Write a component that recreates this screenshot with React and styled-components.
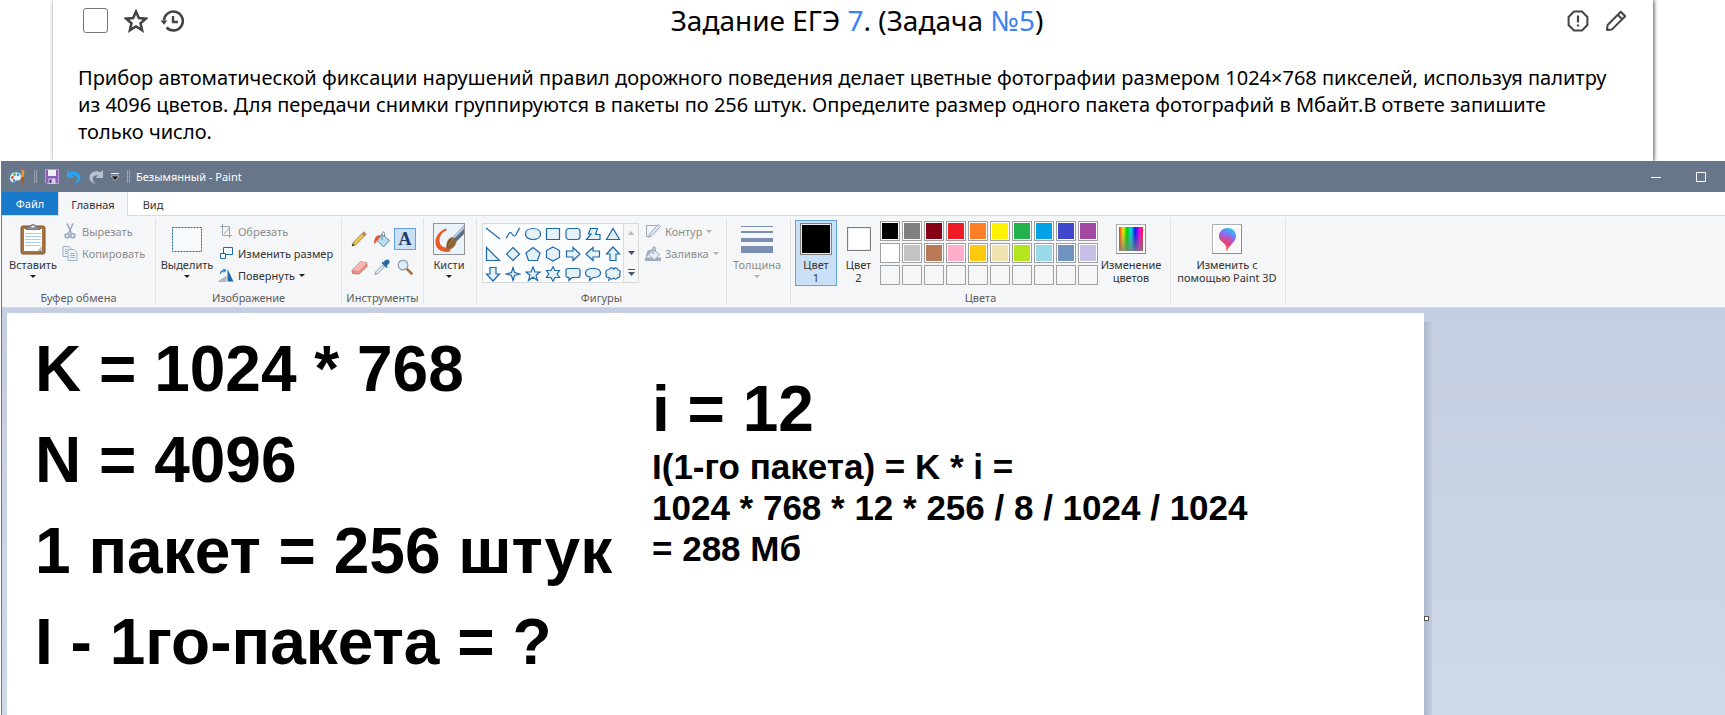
import React from "react";
import styled, { createGlobalStyle, css } from "styled-components";

const Global = createGlobalStyle`
  *, *::before, *::after { box-sizing: border-box; }
  body { margin: 0; background: #fff; color: #000; font-family: "Noto Sans", "Open Sans", sans-serif; }
  button { font: inherit; color: inherit; background: none; border: 0; padding: 0; margin: 0; }
  svg { display: block; flex: none; }
`;

/* ---------- page and task card ---------- */

const Page = styled.div`
  display: flex;
  flex-direction: column;
  height: 100vh;
  overflow: hidden;
`;

const TaskCard = styled.article`
  flex: none;
  margin: 0 72px 0 53px;
  padding-bottom: 16px;
  box-shadow: 1px 0 4px rgba(0, 0, 0, 0.7);
  clip-path: inset(0 -6px 0 -3px);
`;

const TaskHeader = styled.header`
  display: grid;
  grid-template-columns: 1fr auto 1fr;
  align-items: center;
  height: 41px;
  padding: 0 22px 0 30px;
`;

const HeaderSide = styled.div`
  display: flex;
  align-items: center;
  justify-content: ${(p) => (p.$end ? "flex-end" : "flex-start")};
  gap: ${(p) => (p.$end ? "14px" : "12px")};
  padding-right: ${(p) => (p.$end ? "3px" : "0")};
`;

const CheckBox = styled.input`
  appearance: none;
  width: 25px;
  height: 25px;
  margin: 0 4px 0 0;
  border: 1px solid #767676;
  border-radius: 3px;
  background: #fff;
`;

const TaskTitle = styled.h1`
  margin: 0;
  font-size: 28px;
  line-height: 41px;
  font-weight: 400;
`;

const TitleLink = styled.a`
  color: #3b82f6;
  text-decoration: none;
`;

const TaskText = styled.p`
  margin: 23px 38px 0 25px;
  font-size: 20px;
  line-height: 27px;
`;

/* ---------- paint window frame ---------- */

const Window = styled.section`
  flex: 1;
  min-height: 0;
  display: flex;
  flex-direction: column;
  margin-left: 1px;
  border-left: 1px solid #697789;
  font-size: 11px;
  line-height: 13px;
  color: #333;
`;

const TitleBar = styled.div`
  flex: none;
  display: flex;
  align-items: center;
  height: 31px;
  padding: 0 2px 0 7px;
  background: #687689;
  color: #fff;
`;

const QuickTools = styled.div`
  display: flex;
  align-items: center;
  gap: 8px;
`;

const Divider = styled.span`
  width: 3px;
  height: 13px;
  border: solid #99a3b0;
  border-width: 0 1px;
`;

const WindowTitle = styled.span`
  margin-left: 6px;
  flex: 1;
`;

const CaptionButton = styled.button`
  display: flex;
  align-items: center;
  justify-content: center;
  width: 45px;
  height: 31px;
`;

const TabBar = styled.nav`
  flex: none;
  display: flex;
  height: 24px;
  background: #fff;
  border-bottom: 1px solid #dadbdc;
`;

const Tab = styled.button`
  width: ${(p) => p.$width}px;
  height: 24px;
  ${(p) =>
    p.$file &&
    css`
      height: 23px;
      background: #1979ca;
      color: #fff;
    `}
  ${(p) =>
    p.$active &&
    css`
      background: #f5f6f7;
      border: solid #dadbdc;
      border-width: 0 1px;
    `}
`;

/* ---------- ribbon ---------- */

const Ribbon = styled.div`
  flex: none;
  display: flex;
  height: 92px;
  padding-top: 2px;
  background: #f5f6f7;
  border-bottom: 1px solid #dadbdc;
`;

const Group = styled.div`
  display: flex;
  flex-direction: column;
  align-items: center;
  flex: none;
  width: ${(p) => p.$width}px;
  height: 86px;
  border-right: 1px solid #e2e3e4;
`;

const GroupBody = styled.div`
  display: flex;
  align-items: flex-start;
  width: 100%;
  height: 73px;
  padding: 2px 0 0 ${(p) => p.$left || 0}px;
  gap: ${(p) => p.$gap || 0}px;
`;

const GroupLabel = styled.span`
  color: #5c5c5c;
  white-space: nowrap;
`;

const BigButton = styled.button`
  display: flex;
  flex-direction: column;
  align-items: center;
  flex: none;
  width: ${(p) => p.$width}px;
  height: 66px;
  border: 1px solid ${(p) => (p.$active ? "#62a2e4" : "transparent")};
  background: ${(p) => (p.$active ? "#c9e0f7" : "transparent")};
  color: ${(p) => (p.$disabled ? "#8d8d8d" : "inherit")};
`;

const IconSlot = styled.span`
  display: flex;
  align-items: center;
  justify-content: center;
  height: 36px;
  margin-bottom: 1px;
`;

const ButtonText = styled.span`
  text-align: center;
  white-space: nowrap;
`;

const Arrow = styled.span`
  flex: none;
  width: 0;
  height: 0;
  border: 3px solid transparent;
  border-bottom: 0;
  border-top-color: ${(p) => (p.$muted ? "#b0b0b0" : "#1e1e1e")};
  ${BigButton} & { margin-top: 4px; }
`;

const CommandList = styled.div`
  display: flex;
  flex-direction: column;
`;

const Command = styled.button`
  display: flex;
  align-items: center;
  gap: 4px;
  height: 22px;
  white-space: nowrap;
  color: ${(p) => (p.$disabled ? "#8d8d8d" : "inherit")};
`;

const ToolGrid = styled.div`
  display: grid;
  grid-template-columns: repeat(3, 22px);
  gap: 6px 1px;
  padding-top: 8px;
`;

const ToolButton = styled.button`
  display: flex;
  align-items: center;
  justify-content: center;
  height: 22px;
  border: 1px solid ${(p) => (p.$active ? "#62a2e4" : "transparent")};
  background: ${(p) => (p.$active ? "#c9e0f7" : "transparent")};
  font: 700 18px/20px "Liberation Serif", serif;
  color: #1f3a63;
`;

const BrushFrame = styled.span`
  border: 1px solid #8f9499;
  background: #eaf3fa;
`;

const Gallery = styled.div`
  display: flex;
  margin-top: 3px;
  border: 1px solid #d8dadc;
  background: #fbfcfd;
`;

const ShapeGrid = styled.div`
  display: grid;
  grid-template-columns: repeat(7, 20px);
  grid-auto-rows: 20px;
  height: 58px;
`;

const ShapeButton = styled.button`
  display: flex;
  align-items: center;
  justify-content: center;
  height: 19px;
`;

const GalleryScroll = styled.div`
  display: flex;
  flex-direction: column;
  justify-content: space-around;
  width: 15px;
  border-left: 1px solid #d8dadc;
  background: #f5f6f7;
`;

const ScrollButton = styled.button`
  display: flex;
  justify-content: center;
`;

const Swatch = styled.span`
  width: ${(p) => p.$size}px;
  height: ${(p) => p.$size}px;
  border: 1px solid #7f7f7f;
  padding: 1px;
  background: ${(p) => p.$color} content-box;
  box-shadow: inset 0 0 0 1px #e9eef4;
`;

const Palette = styled.div`
  display: grid;
  grid-template-columns: repeat(10, 20px);
  grid-auto-rows: 20px;
  gap: 2px;
  padding-top: 1px;
`;

const PaletteCell = styled.button`
  border: 1px solid #a0a0a0;
  background: ${(p) => p.$color || "#f5f6f7"};
  box-shadow: ${(p) => (p.$color ? "inset 0 0 0 1px #fff" : "none")};
`;

const PictureFrame = styled.span`
  display: flex;
  padding: 2px;
  border: 1px solid #aeb0b2;
  border-right-color: #8a8c8e;
  border-bottom-color: #8a8c8e;
  background: #fff;
`;

/* ---------- drawing area ---------- */

const Workspace = styled.div`
  flex: 1;
  min-height: 0;
  display: flex;
  padding: 5px 0 0 5px;
  background: linear-gradient(#c5cde0, #cfd9e8);
`;

const Canvas = styled.div`
  flex: 1;
  display: flex;
  position: relative;
  background: #fff;
  color: #000;
  font-family: "Liberation Sans", Arial, sans-serif;
  font-weight: 700;
  white-space: nowrap;
`;

const CanvasSide = styled.div`
  flex: none;
  display: flex;
  align-items: flex-start;
  width: 301px;
  padding-top: 9px;
`;

const CanvasShadow = styled.div`
  align-self: stretch;
  width: 8px;
  background: linear-gradient(90deg, #a9b7ca, #c3cde0);
`;

const ResizeHandle = styled.span`
  position: absolute;
  right: -5px;
  top: 303px;
  width: 5px;
  height: 5px;
  border: 1px solid #555;
  background: #fff;
`;

const GivenNotes = styled.div`
  flex: none;
  width: 616px;
  padding: 11px 0 0 28px;
  font-size: 64px;
  line-height: 91px;
`;

const SolutionNotes = styled.div`
  padding: 60px 0 0 29px;
  font-size: 35px;
  line-height: 41px;
`;

const BigLine = styled.div`
  font-size: 64px;
  line-height: 73px;
`;

/* ---------- icons ---------- */

const StarIcon = () => (
  <svg width="24" height="24" viewBox="0 0 24 24" fill="none" stroke="#444" strokeWidth="2.6">
    <path d="M12 2.6l2.8 6.5 7 .6-5.3 4.600 1.600 6.900L12 17.500l-6.100 3.700 1.600-6.900L2.200 9.700l7-.6z" />
  </svg>
);

const HistoryIcon = () => (
  <svg width="24" height="24" viewBox="0 0 24 24" fill="none" stroke="#444" strokeWidth="2.6">
    <path d="M4 11.500a9.400 9.400 0 1 1 2.600 7" />
    <path d="M13 7v6h5" strokeWidth="2.400" />
    <path d="M.5 11.500h7L4 15.800z" fill="#444" stroke="none" />
  </svg>
);

const ReportIcon = () => (
  <svg width="24" height="24" viewBox="0 0 24 24" fill="none" stroke="#444" strokeWidth="2">
    <path d="M8 2.600h8L21.400 8v8L16 21.400H8L2.600 16V8z" />
    <path d="M12 6.600v7M12 15.600v2" strokeWidth="2.200" />
  </svg>
);

const EditIcon = () => (
  <svg width="24" height="24" viewBox="0 0 24 24" fill="none" stroke="#444" strokeWidth="2" strokeLinejoin="round">
    <path d="M3 21l.6-5L16.800 2.800 21.200 7.200 8 20.400z M13.800 5.800l4.400 4.400" />
  </svg>
);

const PaintIcon = () => (
  <svg width="17" height="16" viewBox="0 0 17 16">
    <path d="M7 3C3 3 .6 6 .6 9.200.6 12.600 3 14 5 13.600c1.600-.4 1.600-2 3-1.800 2 .4 4.600-1 4.600-4.400C12.600 4.800 10 3 7 3z" fill="#e6f1f8" stroke="#4d87b0" strokeWidth=".8" />
    <circle cx="3.400" cy="8.500" r="1.400" fill="#e04a2a" />
    <circle cx="5.600" cy="5.600" r="1.400" fill="#4fae3c" />
    <circle cx="9" cy="5.700" r="1.300" fill="#2d8fe0" />
    <circle cx="5" cy="11.400" r="1.200" fill="#2b76c0" />
    <path d="M12.600 0l2.800 2-.6 6.500h-2z" fill="#f39a2c" />
    <path d="M12.600 8h2.400l-.4 7h-1.600z" fill="#b3561a" />
  </svg>
);

const SaveIcon = () => (
  <svg width="14" height="15" viewBox="0 0 14 15">
    <path d="M.5.5h13v14H2L.5 13z" fill="#8a63b8" stroke="#b79ad6" />
    <path d="M3 1h8v6H3z" fill="#f2ecf8" />
    <path d="M3.500 9.500h7V15h-7z" fill="#d7cbe6" />
    <path d="M4.500 10.500h2V14h-2z" fill="#4b2f76" />
  </svg>
);

const UndoIcon = ({ color, flip }) => (
  <svg width="14" height="14" viewBox="0 0 14 14">
    <g transform={flip ? "matrix(-1 0 0 1 14 0)" : undefined}>
      <path d="M0 0l2.500 2.300C7 0 13 2 13.500 7c.3 3.500-2.500 6-6 7 2.500-2.500 3.500-4.500 2.500-6.500C9 5.500 7 5 5 5.500L7.500 8H0z" fill={color} />
    </g>
  </svg>
);

const QuickArrowIcon = () => (
  <svg width="8" height="8" viewBox="0 0 8 8">
    <path d="M0 .5h8" stroke="#fff" />
    <path d="M0 3h8L4 7.500z" fill="#111" stroke="#fff" strokeWidth=".6" />
  </svg>
);

const MinimizeIcon = () => (
  <svg width="10" height="10" viewBox="0 0 10 10"><path d="M0 5.500h10" stroke="#fff" /></svg>
);

const MaximizeIcon = () => (
  <svg width="10" height="10" viewBox="0 0 10 10"><path d="M.5.500h9v9h-9z" fill="none" stroke="#fff" /></svg>
);

const PasteIcon = () => (
  <svg width="26" height="32" viewBox="0 0 26 32">
    <rect x="1" y="3" width="24" height="28" rx="2" fill="#a9733d" stroke="#80532a" />
    <path d="M4 6h18v22H4z" fill="#fff" />
    <path d="M5 10.500h16M5 13.500h16M5 16.500h16M5 19.500h16M5 22.500h16" stroke="#a9cdea" />
    <path d="M22 23v5h-5z" fill="#b9c6d2" />
    <path d="M6 6.500c0-2 2-2.500 4-3C10.500 1 15.500 1 16 3.500c2 .5 4 1 4 3z" fill="#8c9399" stroke="#5d6369" strokeWidth=".8" />
    <path d="M11.500 3.500h3" stroke="#fff" strokeWidth="1.500" />
  </svg>
);

const CutIcon = () => (
  <svg width="16" height="16" viewBox="0 0 16 16" fill="none" stroke="#98a7bd" strokeWidth="1.600">
    <path d="M5 .5l4.500 10M11 .5L6.500 10.500" />
    <circle cx="5.200" cy="12.800" r="2" />
    <circle cx="10.800" cy="12.800" r="2" />
  </svg>
);

const CopyIcon = () => (
  <svg width="16" height="16" viewBox="0 0 16 16" fill="#f1f5fa" stroke="#9fb0c8">
    <path d="M1 1.500h6l3 3v7H1z" />
    <path d="M6 4.500h6l3 3v8H6z" />
    <path d="M8 8.500h5M8 10.500h5M8 12.500h5M3 4.500h2M3 6.500h2M3 8.500h2" />
  </svg>
);

const SelectIcon = () => (
  <svg width="30" height="25" viewBox="0 0 30 25">
    <path d="M.5.500h29v24H.5z" fill="#f7fafd" stroke="#1e69aa" strokeDasharray="2 1" />
  </svg>
);

const CropIcon = () => (
  <svg width="16" height="14" viewBox="0 0 16 14" fill="none" stroke="#9aa6b5">
    <path d="M4.500 0v11.500H14M2 2.500h9.500V14M6 10l6-7" />
  </svg>
);

const ResizeIcon = () => (
  <svg width="16" height="14" viewBox="0 0 16 14" fill="#f5faff" stroke="#1e69aa">
    <path d="M5.500 1.500h9v7h-9z" />
    <path d="M2.500 7.500h5v5h-5z" />
  </svg>
);

const RotateIcon = () => (
  <svg width="16" height="14" viewBox="0 0 16 14">
    <path d="M9.500 1v12.500H15.500z" fill="#1e69aa" />
    <path d="M8 8.500v5H.5z" fill="#b5bcc4" stroke="#8f979f" strokeWidth=".6" />
    <path d="M2.500 6c0-2.500 1.500-3.500 4-3.500" fill="none" stroke="#2d7fd0" strokeWidth="1.300" />
    <path d="M5.500 0l3 2.500-3 2.500z" fill="#2d7fd0" />
  </svg>
);

const PencilIcon = () => (
  <svg width="16" height="16" viewBox="0 0 16 16">
    <path d="M1 15l1.500-3.800L11 2.500 13.500 5 5 13.500z" fill="#edc552" stroke="#8c6a1d" strokeWidth=".7" />
    <path d="M11 2.500L13 .8l2.300 2.200L13.600 5z" fill="#dd7a6c" stroke="#7f8f6a" strokeWidth=".7" />
    <path d="M1 15l.8-2.500 1.700 1.700z" fill="#222" />
  </svg>
);

const BucketIcon = ({ muted }) => (
  <svg width={muted ? 16 : 18} height="17" viewBox="0 0 18 17">
    {muted && <path d="M0 13h18v4H0z" fill="#9fadc6" />}
    <path d="M9 3.500l7.500 6-6 6.500L4 9.500z" fill={muted ? "#e6ecf4" : "#b9dcf3"} stroke={muted ? "#94a2b8" : "#5a87aa"} />
    <path d="M9 9V2.500C9 .5 11.500.5 11.500 2.500V6" fill="none" stroke="#7b8794" />
    <path d="M8 4.500C4 3.500 1 6 1.200 13c1.600-.5 2.300-3 3.300-4z" fill={muted ? "#9dabc2" : "#e8552b"} />
  </svg>
);

const EraserIcon = () => (
  <svg width="17" height="15" viewBox="0 0 17 15">
    <path d="M1 10l8.500-8.500 6.500 1.500v3.500L8 14l-6.500-.5z" fill="#e98f88" stroke="#b65a55" strokeWidth=".7" />
    <path d="M1 10l6.800 1 8.200-8-6.500-1.500z" fill="#f6b7b1" />
  </svg>
);

const DropperIcon = () => (
  <svg width="16" height="16" viewBox="0 0 16 16">
    <path d="M1 15.500l1-3L8.500 6 10.500 8 4 14.500z" fill="#dfe9f2" stroke="#77899a" strokeWidth=".8" />
    <path d="M7.500 4l5 5 1.200-1.200-1-1C15 5 16.500 3 15 1.200S11 1 9.500 3.300l-.8-.7z" fill="#2368a8" />
  </svg>
);

const LoupeIcon = () => (
  <svg width="16" height="16" viewBox="0 0 16 16">
    <path d="M9.500 9.500l5 5" stroke="#a8733f" strokeWidth="2.600" strokeLinecap="round" />
    <circle cx="6" cy="6" r="4.800" fill="#dcecf8" stroke="#9aa3ab" strokeWidth="1.400" />
  </svg>
);

const BrushIcon = () => (
  <svg width="30" height="30" viewBox="0 0 30 30">
    <path d="M12 4.500C5 7 1 13 1.500 19c.5 7 7 10 15 8.500l-1-4C10 24.500 6 22 5.500 17.500 5 13 8 8 13 6z" fill="#e65a26" />
    <path d="M30 1v9l-8 8-4-4z" fill="#5c6c80" />
    <path d="M30 1L18.500 13l2 1.500L30 5z" fill="#b8c6d4" />
    <path d="M18 13l4.500 4.500c-1 6-6 9.500-12 8.500 3-1 1.500-3 2-6 .8-4 2.500-6 5.500-7z" fill="#9a6a3c" />
    <path d="M17 15c-3 2-3 5-4 9M20 17c-2 4-3 5-5 7" fill="none" stroke="#6d4420" strokeWidth=".8" />
  </svg>
);

const shapePaths = [
  "M1 2l14 11",
  "M1 12c2-1 2-5 4-5.500s2 3.500 4.500 3.500S12 4 15 2",
  "M8 2.500c4 0 7.500 2 7.500 5.500s-3.500 5.500-7.500 5.500S.5 11.500.5 8 4 2.500 8 2.500z",
  "M1.500 2.500h13v11h-13z",
  "M4 2.500h8a3 3 0 0 1 3 3v5a3 3 0 0 1-3 3H4a3 3 0 0 1-3-3v-5a3 3 0 0 1 3-3z",
  "M5.500 2.500h7l-2 6h4.500v5H1.500L6 8h-2.500z",
  "M8 2.500l6.500 11h-13z",
  "M1.500 1.500v13h13z",
  "M8 1.500L14.500 8 8 14.500 1.500 8z",
  "M8 1.500l7 5.500-2.500 7.500h-9L1 7z",
  "M8 1l6.500 3.500v7L8 15l-6.500-3.500v-7z",
  "M1.500 5h6.500V1.500L15 8l-7 6.500V11H1.500z",
  "M14.500 5H8V1.500L1 8l7 6.500V11h6.500z",
  "M5 14.500V8H1.500L8 1l6.500 7H11v6.500z",
  "M5 1.500V8H1.500L8 15l6.500-7H11V1.500z",
  "M8 1.500L9.500 6.500 14.500 8 9.500 9.500 8 14.500 6.500 9.500 1.500 8 6.500 6.500z",
  "M8 1l2 5h5l-4 3.200 1.500 5.300L8 11.300 3.500 14.500 5 9.200 1 6h5z",
  "M8 .8l2 3.700h4.500L12.200 8l2.300 3.500H10L8 15.200 6 11.500H1.500L3.800 8 1.500 4.500H6z",
  "M3.500 2.500h9c1.500 0 2.500.5 2.500 2v5c0 1.500-1 2-2.500 2H7l-3 3v-3c-2 0-3-.5-3-2v-5c0-1.500 1-2 2.500-2z",
  "M8 2.500c4 0 7.500 1.500 7.500 4.500S12 11.500 8 11.500l-3.500 3 .5-3.500C2 10.500.5 9 .5 7 .5 4 4 2.500 8 2.500z",
  "M4 3.500C6 1 8 2 8.500 3c2-2 4-1 4.500 1 2 0 3 2 1.500 4 1 2 0 4-2 3.500-1 2-3 2-4 .5-1.500 2-4 1-4.500-.5C1.500 12 .5 10 1.500 8.500 0 6 1 3.500 4 3.500zM4 13l-.5 2",
];

const ShapeIcon = ({ d, open }) => (
  <svg width="16" height="16" viewBox="0 0 16 16">
    <path d={d} fill={open ? "none" : "#e4f2f8"} stroke="#1e69aa" strokeWidth="1.200" />
  </svg>
);

const OutlineIcon = () => (
  <svg width="16" height="16" viewBox="0 0 16 16" fill="none" stroke="#9aa8bd">
    <path d="M12 2.500H1.500v11h2" />
    <path d="M3.500 14.500l1-3.500L13 1.500l2.500 2L7 12.500z" fill="#dfe6ef" />
  </svg>
);

const ThicknessIcon = () => (
  <svg width="32" height="27" viewBox="0 0 32 27" fill="#7b8db1">
    <path d="M0 0h32v1H0zM0 5h32v2H0zM0 12h32v4H0zM0 20h32v7H0z" />
  </svg>
);

const SpectrumIcon = () => (
  <svg width="24" height="24" viewBox="0 0 24 24">
    <defs>
      <linearGradient id="hue">
        <stop offset="0" stopColor="#f22" />
        <stop offset=".17" stopColor="#ee0" />
        <stop offset=".33" stopColor="#0c0" />
        <stop offset=".5" stopColor="#0dd" />
        <stop offset=".68" stopColor="#11e" />
        <stop offset=".85" stopColor="#e0e" />
        <stop offset="1" stopColor="#f22" />
      </linearGradient>
      <linearGradient id="fade" x2="0" y2="1">
        <stop offset=".2" stopColor="#808080" stopOpacity="0" />
        <stop offset="1" stopColor="#808080" stopOpacity=".8" />
      </linearGradient>
    </defs>
    <path d="M0 0h24v24H0z" fill="url(#hue)" />
    <path d="M0 0h24v24H0z" fill="url(#fade)" />
  </svg>
);

const Paint3DIcon = () => (
  <svg width="24" height="24" viewBox="0 0 24 24">
    <defs>
      <linearGradient id="drop" x1=".7" y1="0" x2=".3" y2="1">
        <stop offset="0" stopColor="#1fc8ee" />
        <stop offset=".35" stopColor="#8a6cf0" />
        <stop offset=".65" stopColor="#e0408c" />
        <stop offset="1" stopColor="#f7a51c" />
      </linearGradient>
    </defs>
    <path d="M0 0h24v24H0z" fill="#f7f7f7" />
    <path d="M12.500 1C17 1 21 4.500 21 9c0 6-6 8-9.500 15.500-1-2 .5-4-1-6.500C8 15 4 13.500 4 9c0-4.500 4-8 8.500-8z" fill="url(#drop)" />
    <path d="M4 9.500c2 4 6 2 8-.5s5 1 4 5c-1 3-4 5-4.500 9.500-1-2 .5-4-1-6C8.500 15 4.500 13.500 4 9.500z" fill="#e8456e" opacity=".4" />
  </svg>
);

const ScrollIcon = ({ kind }) => (
  <svg width="8" height="7" viewBox="0 0 8 7">
    {kind === "up" && <path d="M1 5l3-4 3 4z" fill="#b4b8bf" />}
    {kind === "down" && <path d="M1 2h7L4.500 6z" fill="#44546a" />}
    {kind === "more" && <path d="M1 0h7v1H1zM1 3h7L4.500 7z" fill="#44546a" />}
  </svg>
);

/* ---------- data ---------- */

const paletteColors = [
  "#000000", "#7f7f7f", "#880015", "#ed1c24", "#ff7f27", "#fff200", "#22b14c", "#00a2e8", "#3f48cc", "#a349a4",
  "#ffffff", "#c3c3c3", "#b97a57", "#ffaec9", "#ffc90e", "#efe4b0", "#b5e61d", "#99d9ea", "#7092be", "#c8bfe7",
  null, null, null, null, null, null, null, null, null, null,
];

const tools = [
  { name: "Карандаш", icon: <PencilIcon /> },
  { name: "Заливка", icon: <BucketIcon /> },
  { name: "Текст", icon: "A", active: true },
  { name: "Ластик", icon: <EraserIcon /> },
  { name: "Палитра", icon: <DropperIcon /> },
  { name: "Масштаб", icon: <LoupeIcon /> },
];

/* ---------- parts ---------- */

function Task() {
  return (
    <TaskCard>
      <TaskHeader>
        <HeaderSide>
          <CheckBox type="checkbox" aria-label="Выбрать задачу" />
          <button aria-label="В избранное"><StarIcon /></button>
          <button aria-label="История"><HistoryIcon /></button>
        </HeaderSide>
        <TaskTitle>
          Задание ЕГЭ <TitleLink href="#ege">7</TitleLink>. (Задача <TitleLink href="#task">№5</TitleLink>)
        </TaskTitle>
        <HeaderSide $end>
          <button aria-label="Сообщить об ошибке"><ReportIcon /></button>
          <button aria-label="Редактировать"><EditIcon /></button>
        </HeaderSide>
      </TaskHeader>
      <TaskText>
        Прибор автоматической фиксации нарушений правил дорожного поведения делает цветные фотографии размером
        1024×768 пикселей, используя палитру из 4096 цветов. Для передачи снимки группируются в пакеты по 256 штук.
        Определите размер одного пакета фотографий в Мбайт.В ответе запишите только число.
      </TaskText>
    </TaskCard>
  );
}

function RibbonGroup({ width, left, gap, label, children }) {
  return (
    <Group $width={width}>
      <GroupBody $left={left} $gap={gap}>{children}</GroupBody>
      {label && <GroupLabel>{label}</GroupLabel>}
    </Group>
  );
}

function LargeCommand({ width, icon, label, second, arrow, active, disabled }) {
  return (
    <BigButton $width={width} $active={active} $disabled={disabled}>
      <IconSlot>{icon}</IconSlot>
      <ButtonText>
        {label}
        {second && <><br />{second}</>}
      </ButtonText>
      {arrow && <Arrow $muted={disabled} />}
    </BigButton>
  );
}

function SmallCommand({ icon, label, arrow, disabled }) {
  return (
    <Command $disabled={disabled}>
      {icon}
      <span>{label}</span>
      {arrow && <Arrow $muted={disabled} />}
    </Command>
  );
}

function PaintRibbon() {
  return (
    <Ribbon>
      <RibbonGroup width={154} left={6} gap={4} label="Буфер обмена">
        <LargeCommand width={50} icon={<PasteIcon />} label="Вставить" arrow />
        <CommandList>
          <SmallCommand icon={<CutIcon />} label="Вырезать" disabled />
          <SmallCommand icon={<CopyIcon />} label="Копировать" disabled />
        </CommandList>
      </RibbonGroup>
      <RibbonGroup width={186} left={4} gap={4} label="Изображение">
        <LargeCommand width={54} icon={<SelectIcon />} label="Выделить" arrow />
        <CommandList>
          <SmallCommand icon={<CropIcon />} label="Обрезать" disabled />
          <SmallCommand icon={<ResizeIcon />} label="Изменить размер" />
          <SmallCommand icon={<RotateIcon />} label="Повернуть" arrow />
        </CommandList>
      </RibbonGroup>
      <RibbonGroup width={82} left={6} label="Инструменты">
        <ToolGrid>
          {tools.map((t) => (
            <ToolButton key={t.name} $active={t.active} aria-label={t.name}>{t.icon}</ToolButton>
          ))}
        </ToolGrid>
      </RibbonGroup>
      <RibbonGroup width={53} left={3}>
        <LargeCommand width={44} icon={<BrushFrame><BrushIcon /></BrushFrame>} label="Кисти" arrow />
      </RibbonGroup>
      <RibbonGroup width={250} left={5} gap={6} label="Фигуры">
        <Gallery>
          <ShapeGrid>
            {shapePaths.map((d, i) => (
              <ShapeButton key={d} aria-label={`Фигура ${i + 1}`}><ShapeIcon d={d} open={i < 2} /></ShapeButton>
            ))}
          </ShapeGrid>
          <GalleryScroll>
            {["up", "down", "more"].map((k) => (
              <ScrollButton key={k} aria-label={k}><ScrollIcon kind={k} /></ScrollButton>
            ))}
          </GalleryScroll>
        </Gallery>
        <CommandList>
          <SmallCommand icon={<OutlineIcon />} label="Контур" arrow disabled />
          <SmallCommand icon={<BucketIcon muted />} label="Заливка" arrow disabled />
        </CommandList>
      </RibbonGroup>
      <RibbonGroup width={64} left={2}>
        <LargeCommand width={56} icon={<ThicknessIcon />} label="Толщина" arrow disabled />
      </RibbonGroup>
      <RibbonGroup width={380} left={4} label="Цвета">
        <LargeCommand width={42} active icon={<Swatch $size={32} $color="#000" />} label="Цвет" second="1" />
        <LargeCommand width={43} icon={<Swatch $size={24} $color="#fff" />} label="Цвет" second="2" />
        <Palette>
          {paletteColors.map((c, i) => (
            <PaletteCell key={i} $color={c} aria-label={c || "Пусто"} />
          ))}
        </Palette>
        <LargeCommand width={66} icon={<PictureFrame><SpectrumIcon /></PictureFrame>} label="Изменение" second="цветов" />
      </RibbonGroup>
      <RibbonGroup width={115} left={3}>
        <LargeCommand width={106} icon={<PictureFrame><Paint3DIcon /></PictureFrame>} label="Изменить с" second="помощью Paint 3D" />
      </RibbonGroup>
    </Ribbon>
  );
}

export default function App() {
  return (
    <Page>
      <Global />
      <Task />
      <Window>
        <TitleBar>
          <QuickTools>
            <PaintIcon />
            <Divider />
            <button aria-label="Сохранить"><SaveIcon /></button>
            <button aria-label="Отменить"><UndoIcon color="#2ba0ee" /></button>
            <button aria-label="Вернуть"><UndoIcon color="#b4c0ce" flip /></button>
            <button aria-label="Настройка панели"><QuickArrowIcon /></button>
            <Divider />
          </QuickTools>
          <WindowTitle>Безымянный - Paint</WindowTitle>
          <CaptionButton aria-label="Свернуть"><MinimizeIcon /></CaptionButton>
          <CaptionButton aria-label="Развернуть"><MaximizeIcon /></CaptionButton>
        </TitleBar>
        <TabBar>
          <Tab $file $width={56}>Файл</Tab>
          <Tab $active $width={70}>Главная</Tab>
          <Tab $width={50}>Вид</Tab>
        </TabBar>
        <PaintRibbon />
        <Workspace>
          <Canvas>
            <GivenNotes>
              <div>K = 1024 * 768</div>
              <div>N = 4096</div>
              <div>1 пакет = 256 штук</div>
              <div>I - 1го-пакета = ?</div>
            </GivenNotes>
            <SolutionNotes>
              <BigLine>i = 12</BigLine>
              <div>I(1-го пакета) = K * i =</div>
              <div>1024 * 768 * 12 * 256 / 8 / 1024 / 1024</div>
              <div>= 288 Мб</div>
            </SolutionNotes>
            <ResizeHandle />
          </Canvas>
          <CanvasSide><CanvasShadow /></CanvasSide>
        </Workspace>
      </Window>
    </Page>
  );
}
